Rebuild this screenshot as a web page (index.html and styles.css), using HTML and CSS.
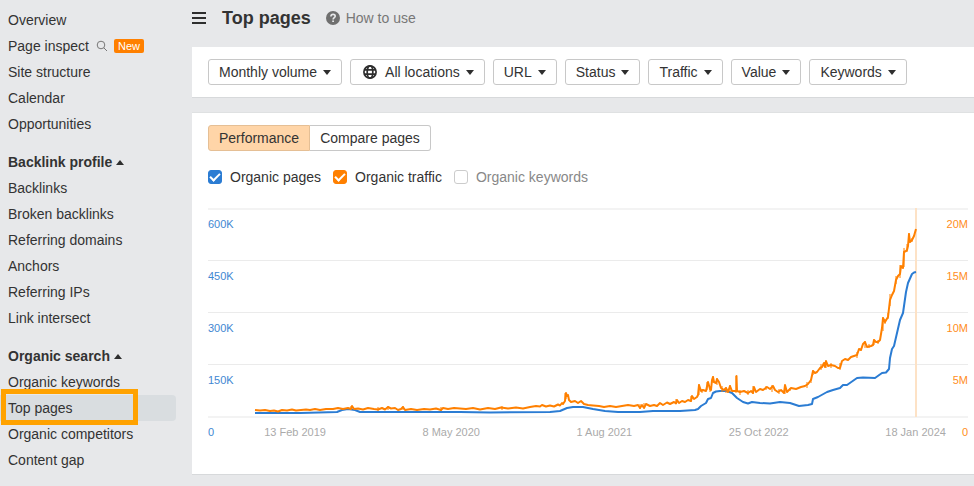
FILE: index.html
```
<!DOCTYPE html>
<html lang="en">

<head>
    <meta charset="UTF-8" />
    <meta name="viewport" content="width=device-width, initial-scale=1.0" />
    <title>Top pages</title>
    <link rel="stylesheet" href="styles.css">
</head>

<body>
    <div class="layout">
        <nav class="sidebar">
            <ul>
                <li><a href="#">Overview</a></li>
                <li>
                    <a href="#">Page inspect
                        <svg class="search-icon" width="12" height="12" viewBox="0 0 12 12">
                            <circle cx="5" cy="5" r="3.8" />
                            <path d="M7.8 7.8L11 11" />
                        </svg>
                        <span class="badge">New</span>
                    </a>
                </li>
                <li><a href="#">Site structure</a></li>
                <li><a href="#">Calendar</a></li>
                <li><a href="#">Opportunities</a></li>
            </ul>

            <button class="section-title">Backlink profile <span class="caret-up"></span></button>
            <ul>
                <li><a href="#">Backlinks</a></li>
                <li><a href="#">Broken backlinks</a></li>
                <li><a href="#">Referring domains</a></li>
                <li><a href="#">Anchors</a></li>
                <li><a href="#">Referring IPs</a></li>
                <li><a href="#">Link intersect</a></li>
            </ul>

            <button class="section-title">Organic search <span class="caret-up"></span></button>
            <ul>
                <li><a href="#">Organic keywords</a></li>
                <li><a href="#" class="active">Top pages</a></li>
                <li><a href="#">Organic competitors</a></li>
                <li><a href="#">Content gap</a></li>
            </ul>
        </nav>

        <main>
            <header>
                <button class="menu-button" aria-label="Menu">
                    <svg width="14" height="12" viewBox="0 0 14 12">
                        <path d="M0 1h14M0 6h14M0 11h14" stroke="#2e2e2e" stroke-width="2" />
                    </svg>
                </button>
                <h1>Top pages</h1>
                <a href="#" class="help">
                    <svg width="14" height="14" viewBox="0 0 14 14">
                        <circle cx="7" cy="7" r="7" fill="#6f6f6f" />
                        <path d="M4.9 5.5C4.9 4.1 5.8 3.4 7.1 3.4C8.3 3.4 9.2 4.1 9.2 5.2C9.2 6.6 7.1 6.7 7.1 8.5" fill="none" stroke="#e7e8ea" stroke-width="1.6" />
                        <path d="M6.2 9.4h1.8v1.7H6.2z" fill="#e7e8ea" />
                    </svg>
                    How to use
                </a>
            </header>

            <section class="card filters">
                <button aria-haspopup="true">Monthly volume <span class="caret-down"></span></button>
                <button aria-haspopup="true">
                    <svg class="globe" width="14" height="14" viewBox="0 0 14 14">
                        <circle cx="7" cy="7" r="6.1" />
                        <ellipse cx="7" cy="7" rx="2.8" ry="6.1" />
                        <path d="M1 4.8h12M1 9.2h12" />
                    </svg>
                    All locations <span class="caret-down"></span>
                </button>
                <button aria-haspopup="true">URL <span class="caret-down"></span></button>
                <button aria-haspopup="true">Status <span class="caret-down"></span></button>
                <button aria-haspopup="true">Traffic <span class="caret-down"></span></button>
                <button aria-haspopup="true">Value <span class="caret-down"></span></button>
                <button aria-haspopup="true">Keywords <span class="caret-down"></span></button>
            </section>

            <section class="card performance">
                <div class="tabs">
                    <button class="selected">Performance</button>
                    <button>Compare pages</button>
                </div>

                <div class="series">
                    <label><input type="checkbox" class="blue" checked> Organic pages</label>
                    <label><input type="checkbox" class="orange" checked> Organic traffic</label>
                    <label class="off"><input type="checkbox"> Organic keywords</label>
                </div>

                <div class="chart">
                    <div class="row"><span>600K</span><span class="right">20M</span></div>
                    <div class="row"><span>450K</span><span class="right">15M</span></div>
                    <div class="row"><span>300K</span><span class="right">10M</span></div>
                    <div class="row"><span>150K</span><span class="right">5M</span></div>
                    <div class="row last">
                        <span>0</span>
                        <div class="dates">
                            <span>13 Feb 2019</span>
                            <span>8 May 2020</span>
                            <span>1 Aug 2021</span>
                            <span>25 Oct 2022</span>
                            <span>18 Jan 2024</span>
                        </div>
                        <span class="right">0</span>
                    </div>
                    <svg class="lines" viewBox="0 0 760 209" preserveAspectRatio="none">
                        <path class="today" d="M708 0V209" />
                        <path class="pages" d="M47 205L92 205L129 204L134 202L140 201L147 202L152 204L252 204L282 204.5L342 204L352 203L359 200L365 199L375 199L385 201L397 203L410 204L432 204L445 203L472 203L487 202L490 201L493 198L498 195L500 191L503 190L505 185L508 183.5L512 183L519 183L524 185L529 190L535 194L540 195.5L544 194L552 195L562 195.5L572 194L582 195L591 198L600 197L604 196L605 191L610 189L619 184L625 182L632 180L635 177L639 177L649 170L655 169.5L667 170L674 165L678 164.5L681 161L682 150L684 141L686 138L692 112L695 105L698 84L700 75L704 66L706 64.5L708 64" />
                        <path class="traffic" d="M47 202L52 202.5L57 202L62 203L66 202.5L70 203.5L74 202L79 202.5L84 201.5L88 202.5L93 202L98 201.5L102 202L107 201L112 202L118 201L125 201L130 200L135 201L140 200L143 201L144 198L146 201L150 200.5L155 201.5L160 200L166 201L170 201.5L174 200L177 201.5L180 199L183 200.5L187 200L190 202L193 201L195 199L197 202L203 201L209 202L216 201L222 201.5L228 200.5L233 202L235 200L240 201L246 200L252 200.5L258 201L265 200L272 201.5L280 200L287 201L293 199.5L300 200.5L308 199.5L315 200.5L322 199L328 198L332 198.5L334 197L338 198.5L342 197.5L346 198.5L350 196.5L352 197.5L354 195L355 196L357 193L358 185L359 188L360 187L361 192L363 194L367 193L370 195L373 193L376 196L380 197L385 197.5L391 198L396 199L402 198L408 199L414 198L420 197L426 198L430 197L432 200L434 197L436 200L438 196L442 198L446 197L449 198L452 195L455 197L459 194.5L462 196L466 194L468 195.5L469 192L471 195L474 193L477 194L480 192L483 193L484 188L486 191L489 189L490 187L491 177L493 183L495 182L498 183L500 174L502 181L503 182L504 172L505 169L506 174L508 175L509 171L511 174L513 180L516 182L518 180L520 184L522 178L524 183L527 183L528.5 183L528.5 168L529 183L532 184L536 183L540 185L543 183L545 185L546 179L548 184L552 181L555 182L559 179L562 181L565 178L567 182L570 184L573 182L576 185L577 177L579 184L583 180L588 181L593 179L597 178L600 176L603 172L605 163L607 165L609 164L612 160L614 159L616 155L617 159L618 153L620 158L623 157L627 158L630 160L632 160L634 153L637 151L640 152L643 149L646 148L649 147L651 141L653 142L655 136L657 134L659 139L663 138L665 137L666 132L668 134L670 134L672 132L674 120L675 110L677 114L680 109L682 92L684 87L686 83L688 72L690 68L692 66L693 58L695 60L696 44L698 43L699 42L700 38L701 26L702 34L704 32L706 28L708 21" />
                        <path class="traffic noise" d="M143 198V202M170 199V203M180 198V202M195 198V202M233 199V203M294 198V202M357 185V193M358 185V191M432 196V201M436 195V200M468 191V196M483 188V194M491 176V187M494 181V185M499 174V182M502 179V184M505 168V175M509 170V177M514 178V184M518 179V185M522 177V184M528 168V185M532 182V187M540 182V187M545 178V186M558 178V182M564 177V184M571 181V186M577 177V186M582 180V183M599 174V180M603 171V175M605 162V167M613 156V162M618 153V160M623 155V160M632 155V162M649 144V150M657 133V140M661 136V140M666 131V137M670 132V136M675 109V123M677 111V116M680 105V111M682 86V98M688 68V76M692 57V70M696 40V59M699 36V44M701 25V35M704 30V34" />
                    </svg>
                </div>
            </section>
        </main>
    </div>
</body>

</html>
```
FILE: styles.css
```
*,
*::before,
*::after {
    box-sizing: border-box;
}

body {
    margin: 0;
    background: #e7e8ea;
    color: #333;
    font-family: "Liberation Sans", Arial, sans-serif;
    font-size: 14px;
    line-height: 26px;
}

a {
    color: inherit;
    text-decoration: none;
}

button {
    color: inherit;
    font: inherit;
    cursor: pointer;
}

.layout {
    display: flex;
    gap: 16px;
    overflow: hidden;
}

.sidebar {
    flex: 0 0 176px;
    padding: 7px 0 0;
}

.sidebar ul {
    list-style: none;
    margin: 0 0 12px;
    padding: 0;
}

.sidebar a {
    display: flex;
    align-items: center;
    height: 26px;
    padding-left: 8px;
    border-radius: 0 4px 4px 0;
    position: relative;
}

.sidebar .active {
    background: #d9dde0;
}

.sidebar .active::after {
    content: "";
    position: absolute;
    top: -6px;
    left: 1px;
    width: 137px;
    height: 36px;
    border: 5px solid #ffa200;
}

.search-icon {
    margin: 0 6px 0 7px;
    fill: none;
    stroke: #777;
}

.badge {
    padding: 0 4px;
    border-radius: 2px;
    background: #ff8000;
    color: white;
    font-size: 11px;
    line-height: 14px;
}

.section-title {
    display: flex;
    align-items: center;
    gap: 4px;
    padding: 0 8px;
    border: 0;
    background: none;
    font-weight: bold;
}

.caret-up {
    border: 4px solid transparent;
    border-top: 0;
    border-bottom: 5px solid #2e2e2e;
}

.caret-down {
    border: 4px solid transparent;
    border-bottom: 0;
    border-top: 5px solid #2e2e2e;
}

main {
    flex: 1;
    min-width: 0;
}

header {
    display: flex;
    align-items: center;
    height: 36px;
    margin-bottom: 11px;
}

.menu-button {
    display: flex;
    padding: 0;
    border: 0;
    background: none;
}

h1 {
    margin: 0 15px 0 16px;
    font-size: 18px;
}

.help {
    display: flex;
    align-items: center;
    gap: 6px;
    color: #777;
}

.card {
    padding: 12px 16px;
    background: white;
    border-bottom: 1px solid #d7d9db;
}

.filters {
    display: flex;
    gap: 8px;
    margin-bottom: 14px;
}

.filters button,
.tabs button {
    display: flex;
    align-items: center;
    height: 26px;
    padding: 0 10px;
    border: 1px solid #c8c8c8;
    border-radius: 3px;
    background: white;
    line-height: 24px;
    white-space: nowrap;
}

.filters button {
    gap: 6px;
}

.globe {
    margin: 0 2px;
    fill: none;
    stroke: #2e2e2e;
    stroke-width: 1.7;
}

.performance {
    padding: 12px 6px 30px 16px;
    border-top: 1px solid #dfe1e2;
}

.tabs {
    display: flex;
    margin-bottom: 13px;
}

.tabs button {
    border-left: 0;
    border-radius: 0 3px 3px 0;
}

.tabs .selected {
    border: 1px solid #e5bf95;
    border-radius: 3px 0 0 3px;
    background: #ffd5a8;
}

.series {
    display: flex;
    gap: 12px;
    margin-bottom: 18px;
}

.series label {
    display: flex;
    align-items: center;
    gap: 8px;
}

.series .off {
    color: #888;
}

.series input {
    appearance: none;
    display: grid;
    place-items: center;
    width: 14px;
    height: 14px;
    margin: 0;
    border: 1px solid #ccc;
    border-radius: 3px;
}

.series .blue {
    border-color: #2b7cd3;
    background: #2b7cd3;
}

.series .orange {
    border-color: #ff8000;
    background: #ff8000;
}

.series input:checked::before {
    content: "";
    width: 10px;
    height: 6px;
    margin-bottom: 2px;
    border: solid white;
    border-width: 0 0 2px 2px;
    transform: rotate(-45deg);
}

.chart {
    position: relative;
    color: #3f87d2;
    font-size: 11px;
    line-height: 14px;
}

.row {
    display: flex;
    justify-content: space-between;
    height: 52px;
    padding-top: 8px;
    border-top: 1px solid #ebebeb;
}

.row:first-child,
.last {
    padding-top: 7px;
    border-top: 2px solid #f3f3f3;
}

.last {
    height: 28px;
}

.right {
    color: #ff8d1c;
}

.dates {
    flex: 1;
    display: flex;
    justify-content: space-between;
    margin: 0 16px 0 50px;
    color: #aaa;
}

.lines {
    position: absolute;
    top: 0;
    left: 0;
    width: 100%;
    height: 209px;
}

.lines path {
    fill: none;
    stroke-width: 2;
    stroke-linejoin: round;
    vector-effect: non-scaling-stroke;
}

.lines .today {
    stroke: #fde2c6;
}

.lines .pages {
    stroke: #2b7cd3;
}

.lines .traffic {
    stroke: #ff8000;
}

.lines .noise {
    stroke-width: 1;
}
```
